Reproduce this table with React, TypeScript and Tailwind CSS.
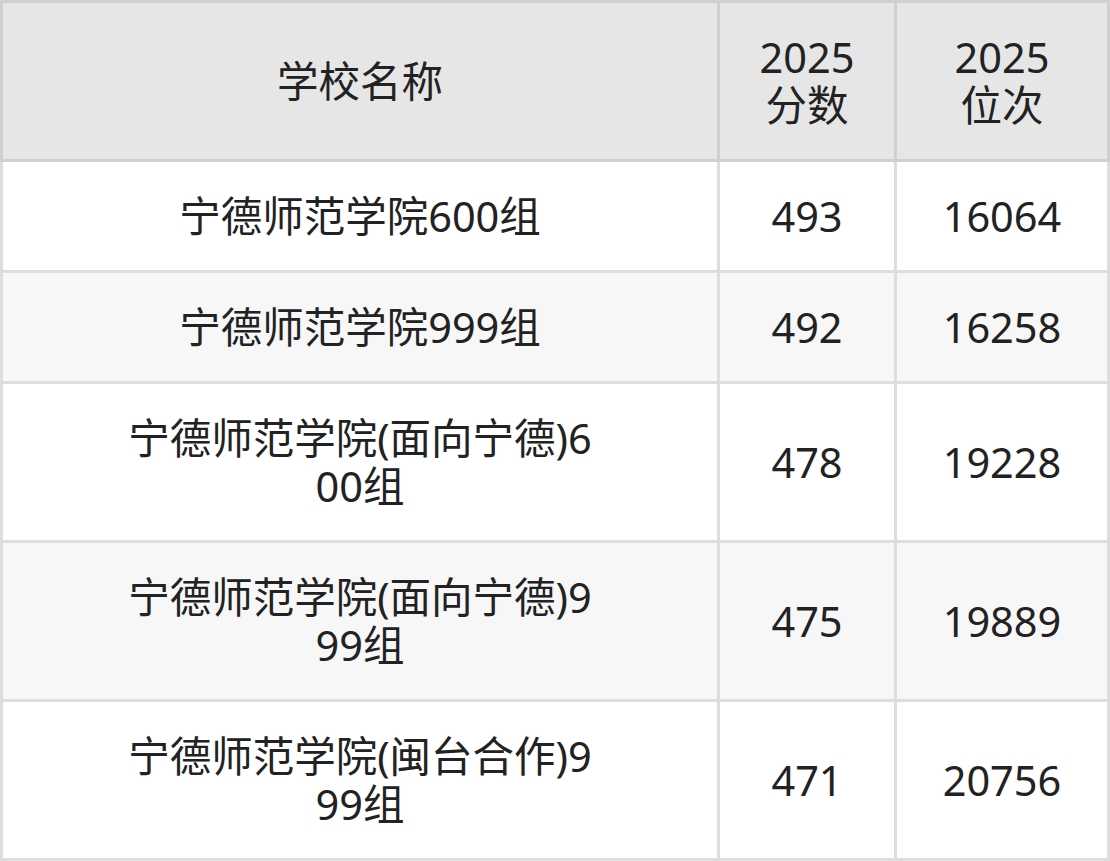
const rows = [
  { name: "宁德师范学院600组", score: "493", rank: "16064" },
  { name: "宁德师范学院999组", score: "492", rank: "16258" },
  { name: "宁德师范学院(面向宁德)600组", score: "478", rank: "19228" },
  { name: "宁德师范学院(面向宁德)999组", score: "475", rank: "19889" },
  { name: "宁德师范学院(闽台合作)999组", score: "471", rank: "20756" },
];

export default function App() {
  return (
    <div
      className="w-[1110px] bg-white text-[41.5px] leading-[48px] text-[#222222]"
      style={{ fontFamily: '"Noto Sans", "Noto Sans CJK SC", sans-serif' }}
    >
      <div className="grid grid-cols-[717px_177px_216px] border-y-[3px] border-[#d0d0d0] bg-[#e6e6e6]">
        <div className="flex items-center justify-center border-l-[3px] border-[#d0d0d0] py-[30px] text-center">
          学校名称
        </div>
        <div className="flex items-center justify-center border-l-[3px] border-[#d0d0d0] py-[30px] text-center">
          2025
          <br />
          分数
        </div>
        <div className="flex items-center justify-center border-x-[3px] border-[#d0d0d0] py-[30px] text-center">
          2025
          <br />
          位次
        </div>
      </div>
      {rows.map((r, i) => (
        <div
          key={r.name}
          className={`grid grid-cols-[717px_177px_216px] border-b-[3px] border-[#dddddd] ${
            i % 2 === 1 ? "bg-[#f7f7f7]" : "bg-white"
          }`}
        >
          <div className="flex items-center justify-center border-l-[3px] border-[#dddddd] py-[30px] text-center">
            <div className="max-w-[478px] break-all">{r.name}</div>
          </div>
          <div className="flex items-center justify-center border-l-[3px] border-[#dddddd] py-[30px] text-center">
            {r.score}
          </div>
          <div className="flex items-center justify-center border-x-[3px] border-[#dddddd] py-[30px] text-center">
            {r.rank}
          </div>
        </div>
      ))}
    </div>
  );
}
